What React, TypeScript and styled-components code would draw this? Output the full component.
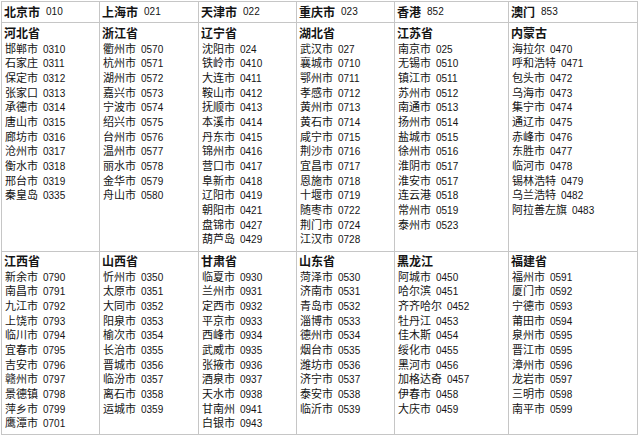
import React from "react";
import styled, { createGlobalStyle } from "styled-components";

const Global = createGlobalStyle`
  html, body { margin: 0; padding: 0; background: #ffffff; }
  body { font-family: "Noto Sans CJK SC", "Liberation Sans", sans-serif; color: #141414; }
`;

type Entry = [string, string];
type Top = { city: string; code: string; province: string; items: Entry[] };
type Bottom = { province: string; items: Entry[] };

const top: Top[] = [
  {
    city: "北京市", code: "010", province: "河北省",
    items: [["邯郸市", "0310"], ["石家庄", "0311"], ["保定市", "0312"], ["张家口", "0313"], ["承德市", "0314"], ["唐山市", "0315"], ["廊坊市", "0316"], ["沧州市", "0317"], ["衡水市", "0318"], ["邢台市", "0319"], ["秦皇岛", "0335"]],
  },
  {
    city: "上海市", code: "021", province: "浙江省",
    items: [["衢州市", "0570"], ["杭州市", "0571"], ["湖州市", "0572"], ["嘉兴市", "0573"], ["宁波市", "0574"], ["绍兴市", "0575"], ["台州市", "0576"], ["温州市", "0577"], ["丽水市", "0578"], ["金华市", "0579"], ["舟山市", "0580"]],
  },
  {
    city: "天津市", code: "022", province: "辽宁省",
    items: [["沈阳市", "024"], ["铁岭市", "0410"], ["大连市", "0411"], ["鞍山市", "0412"], ["抚顺市", "0413"], ["本溪市", "0414"], ["丹东市", "0415"], ["锦州市", "0416"], ["营口市", "0417"], ["阜新市", "0418"], ["辽阳市", "0419"], ["朝阳市", "0421"], ["盘锦市", "0427"], ["葫芦岛", "0429"]],
  },
  {
    city: "重庆市", code: "023", province: "湖北省",
    items: [["武汉市", "027"], ["襄城市", "0710"], ["鄂州市", "0711"], ["孝感市", "0712"], ["黄州市", "0713"], ["黄石市", "0714"], ["咸宁市", "0715"], ["荆沙市", "0716"], ["宜昌市", "0717"], ["恩施市", "0718"], ["十堰市", "0719"], ["随枣市", "0722"], ["荆门市", "0724"], ["江汉市", "0728"]],
  },
  {
    city: "香港", code: "852", province: "江苏省",
    items: [["南京市", "025"], ["无锡市", "0510"], ["镇江市", "0511"], ["苏州市", "0512"], ["南通市", "0513"], ["扬州市", "0514"], ["盐城市", "0515"], ["徐州市", "0516"], ["淮阴市", "0517"], ["淮安市", "0517"], ["连云港", "0518"], ["常州市", "0519"], ["泰州市", "0523"]],
  },
  {
    city: "澳门", code: "853", province: "内蒙古",
    items: [["海拉尔", "0470"], ["呼和浩特", "0471"], ["包头市", "0472"], ["乌海市", "0473"], ["集宁市", "0474"], ["通辽市", "0475"], ["赤峰市", "0476"], ["东胜市", "0477"], ["临河市", "0478"], ["锡林浩特", "0479"], ["乌兰浩特", "0482"], ["阿拉善左旗", "0483"]],
  },
];

const bottom: Bottom[] = [
  { province: "江西省", items: [["新余市", "0790"], ["南昌市", "0791"], ["九江市", "0792"], ["上饶市", "0793"], ["临川市", "0794"], ["宜春市", "0795"], ["吉安市", "0796"], ["赣州市", "0797"], ["景德镇", "0798"], ["萍乡市", "0799"], ["鹰潭市", "0701"]] },
  { province: "山西省", items: [["忻州市", "0350"], ["太原市", "0351"], ["大同市", "0352"], ["阳泉市", "0353"], ["榆次市", "0354"], ["长治市", "0355"], ["晋城市", "0356"], ["临汾市", "0357"], ["离石市", "0358"], ["运城市", "0359"]] },
  { province: "甘肃省", items: [["临夏市", "0930"], ["兰州市", "0931"], ["定西市", "0932"], ["平京市", "0933"], ["西峰市", "0934"], ["武威市", "0935"], ["张掖市", "0936"], ["酒泉市", "0937"], ["天水市", "0938"], ["甘南州", "0941"], ["白银市", "0943"]] },
  { province: "山东省", items: [["菏泽市", "0530"], ["济南市", "0531"], ["青岛市", "0532"], ["淄博市", "0533"], ["德州市", "0534"], ["烟台市", "0535"], ["潍坊市", "0536"], ["济宁市", "0537"], ["泰安市", "0538"], ["临沂市", "0539"]] },
  { province: "黑龙江", items: [["阿城市", "0450"], ["哈尔滨", "0451"], ["齐齐哈尔", "0452"], ["牡丹江", "0453"], ["佳木斯", "0454"], ["绥化市", "0455"], ["黑河市", "0456"], ["加格达奇", "0457"], ["伊春市", "0458"], ["大庆市", "0459"]] },
  { province: "福建省", items: [["福州市", "0591"], ["厦门市", "0592"], ["宁德市", "0593"], ["莆田市", "0594"], ["泉州市", "0595"], ["晋江市", "0595"], ["漳州市", "0596"], ["龙岩市", "0597"], ["三明市", "0598"], ["南平市", "0599"]] },
];

const Table = styled.div`
  display: grid;
  grid-template-columns: 97px 98px 97px 97px 113px 128px;
  grid-template-rows: 20px 228px 182px;
  gap: 1px;
  padding: 1px;
  margin: 1px 0 0 1px;
  width: fit-content;
  background: #c6c6c6;
`;

const HeaderCell = styled.div`
  background: #ffffff;
  display: flex;
  align-items: center;
  padding-left: 2px;
`;

const CityName = styled.span`
  font-size: 12px;
  font-weight: 700;
  line-height: 14px;
`;

const HeaderCode = styled.span`
  font-family: "Liberation Sans", sans-serif;
  font-size: 10px;
  margin-left: 6px;
  line-height: 14px;
`;

const ContentCell = styled.div<{ $pad: number }>`
  background: #ffffff;
  display: flex;
  flex-direction: column;
  padding: ${(p) => p.$pad}px 0 0 2px;
`;

const Province = styled.div`
  font-size: 12px;
  font-weight: 700;
  line-height: 14.67px;
  height: 14.67px;
`;

const Row = styled.div`
  font-size: 11px;
  line-height: 14.67px;
  height: 14.67px;
  white-space: nowrap;
  padding-left: 1px;
`;

const Code = styled.span`
  font-family: "Liberation Sans", sans-serif;
  font-size: 10px;
  margin-left: 5px;
`;

const Items = ({ items }: { items: Entry[] }) => (
  <>
    {items.map(([n, c], i) => (
      <Row key={i}>
        {n}
        <Code>{c}</Code>
      </Row>
    ))}
  </>
);

export default function App() {
  return (
    <>
      <Global />
      <Table>
        {top.map((t) => (
          <HeaderCell key={t.city}>
            <CityName>{t.city}</CityName>
            <HeaderCode>{t.code}</HeaderCode>
          </HeaderCell>
        ))}
        {top.map((t) => (
          <ContentCell key={t.province} $pad={3}>
            <Province>{t.province}</Province>
            <Items items={t.items} />
          </ContentCell>
        ))}
        {bottom.map((b) => (
          <ContentCell key={b.province} $pad={2}>
            <Province>{b.province}</Province>
            <Items items={b.items} />
          </ContentCell>
        ))}
      </Table>
    </>
  );
}
